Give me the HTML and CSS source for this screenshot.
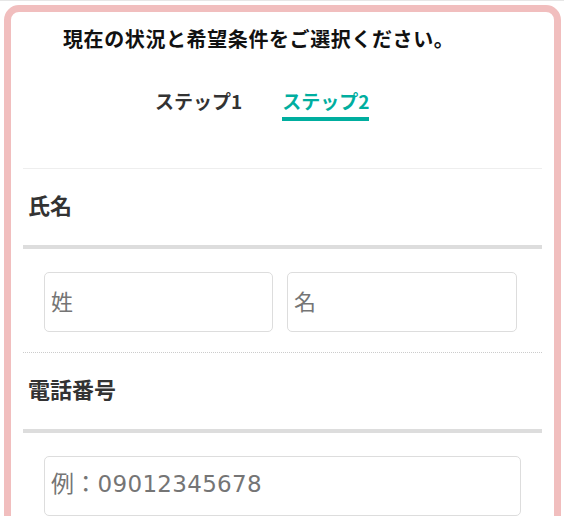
FILE: index.html
```html
<!DOCTYPE html>
<html lang="ja">
<head>
<meta charset="utf-8">
<title>ステップ2</title>
<link rel="stylesheet" href="styles.css">
</head>
<body>
<div class="page">
  <div class="card">
    <h1 class="title">現在の状況と希望条件をご選択ください。</h1>
    <div class="tabs">
      <span class="tab">ステップ1</span>
      <span class="tab active">ステップ2</span>
    </div>
    <div class="form">
      <div class="field-head">氏名</div>
      <div class="field-body">
        <div class="name-row">
          <input class="input" type="text" placeholder="姓">
          <input class="input" type="text" placeholder="名">
        </div>
      </div>
      <div class="field-head field-sep">電話番号</div>
      <div class="field-body">
        <input class="input phone" type="tel" placeholder="例：09012345678">
      </div>
    </div>
  </div>
</div>
</body>
</html>
```

FILE: styles.css
```css
html, body {
  margin: 0;
  background: #fff;
}
body {
  font-family: "Noto Sans CJK JP", "Noto Sans", sans-serif;
  color: #333;
}
.page {
  border-top: 1px solid #e6e6e6;
  padding: 4px 3px 0 4px;
}
.card {
  border: 7px solid #f1bebe;
  border-radius: 15px;
  padding: 12px 12px 60px;
  background: #fff;
}
.title {
  margin: 0;
  padding-left: 40px;
  font-size: 20px;
  line-height: 30px;
  font-weight: bold;
  letter-spacing: 0.6px;
  color: #111;
}
.tabs {
  display: flex;
  margin-top: 34px;
  padding-left: 132px;
  gap: 40px;
}
.tab {
  font-size: 19px;
  line-height: 26px;
  font-weight: bold;
  padding-bottom: 3px;
  border-bottom: 4px solid transparent;
  color: #333;
}
.tab.active {
  color: #00ae9f;
  border-bottom-color: #00ae9f;
}
.form {
  margin-top: 47px;
  border-top: 1px solid #eee;
}
.field-head {
  padding: 19px 5px 24px;
  font-size: 22px;
  line-height: 33px;
  font-weight: bold;
  color: #333;
  border-bottom: 4px solid #ddd;
}
.field-sep {
  border-top: 1px dotted #ccc;
}
.field-body {
  padding: 23px 0 20px 21px;
}
.name-row {
  display: grid;
  grid-template-columns: 229px 230px;
  gap: 14px;
}
.input {
  display: block;
  box-sizing: border-box;
  width: 100%;
  height: 60px;
  margin: 0;
  padding: 0 6px 5px;
  border: 1px solid #ddd;
  border-radius: 5px;
  background: #fff;
  font-family: "Noto Sans CJK JP", sans-serif;
  font-size: 22px;
  color: #333;
  outline: none;
}
.input::placeholder {
  color: #757575;
  opacity: 1;
}
.phone {
  width: 477px;
  font-family: "DejaVu Sans", "Noto Sans CJK JP", sans-serif;
  font-size: 23px;
  letter-spacing: 0.3px;
}
```
